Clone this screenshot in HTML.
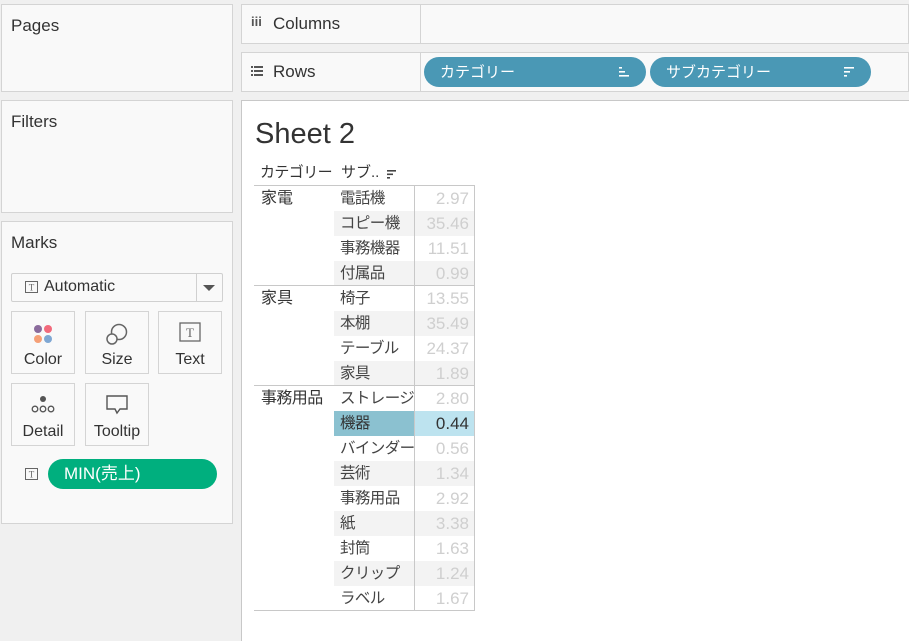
<!DOCTYPE html>
<html><head><meta charset="utf-8"><style>
*{box-sizing:border-box;margin:0;padding:0}
body{width:909px;height:641px;background:#f0f0f0;font-family:"Liberation Sans","Noto Sans CJK JP",sans-serif;color:#333;position:relative;overflow:hidden}
.p{position:absolute;background:#f9f9f9;border:1px solid #d4d4d4}
.t{position:absolute;font-size:17px;color:#333}
.btn{position:absolute;border:1px solid #d4d4d4;background:#f9f9f9;width:64px;height:63px;text-align:center;font-size:16px}
.btn svg{position:absolute;left:50%;top:10px;transform:translateX(-50%)}
.btn span{position:absolute;left:0;right:0;top:39px}
.pill{position:absolute;background:#4a98b5;color:#fff;border-radius:15px;height:30px;font-size:15px;line-height:32px;padding-left:16px}
.cell{position:absolute;font-size:16px;line-height:25px;height:25px;white-space:nowrap;overflow:hidden}
.v{text-align:right;color:#cfcfcf;padding-right:5px;width:60px;left:414px;font-size:17px}
.s{left:334px;width:80px;padding-left:6px;color:#444;font-size:15.5px;letter-spacing:-0.6px}
.g{background:#f3f3f3}
</style></head><body>
<div class="p" style="left:1px;top:4px;width:232px;height:88px"></div>
<div class="t" style="left:11px;top:16px">Pages</div>
<div class="p" style="left:1px;top:100px;width:232px;height:113px"></div>
<div class="t" style="left:11px;top:112px">Filters</div>
<div class="p" style="left:1px;top:221px;width:232px;height:303px"></div>
<div class="t" style="left:11px;top:233px">Marks</div>
<div style="position:absolute;left:11px;top:273px;width:212px;height:29px;border:1px solid #d0d0d0;border-radius:2px;background:#f9f9f9"></div>
<div style="position:absolute;left:196px;top:274px;width:1px;height:27px;background:#d0d0d0"></div>
<div style="position:absolute;left:203px;top:285px;width:0;height:0;border-left:6px solid transparent;border-right:6px solid transparent;border-top:6px solid #555"></div>
<svg style="position:absolute;left:25px;top:281px" width="13" height="12"><rect x=".5" y=".5" width="12" height="11" fill="none" stroke="#666"/><text x="6.5" y="9.5" font-size="9" text-anchor="middle" fill="#666" font-family="Liberation Serif">T</text></svg>
<div class="t" style="left:44px;top:278px;font-size:16px">Automatic</div>
<div class="btn" style="left:11px;top:311px"><svg width="24" height="24"><circle cx="7" cy="7" r="4" fill="#8a6b9c"/><circle cx="17" cy="7" r="4" fill="#f26a7c"/><circle cx="7" cy="17" r="4" fill="#f5a077"/><circle cx="17" cy="17" r="4" fill="#7fa7d3"/></svg><span>Color</span></div>
<div class="btn" style="left:85px;top:311px;width:64px"><svg width="24" height="24"><circle cx="14" cy="10" r="7.5" fill="none" stroke="#666" stroke-width="1.5"/><circle cx="7" cy="17" r="5" fill="#f9f9f9" stroke="#666" stroke-width="1.5"/></svg><span>Size</span></div>
<div class="btn" style="left:158px;top:311px"><svg width="22" height="20"><rect x="1" y="1" width="20" height="18" fill="none" stroke="#666" stroke-width="1.3"/><text x="11" y="15" font-size="13" text-anchor="middle" fill="#666" font-family="Liberation Serif">T</text></svg><span>Text</span></div>
<div class="btn" style="left:11px;top:383px"><svg width="26" height="22"><circle cx="13" cy="5" r="3" fill="#555"/><circle cx="5" cy="15" r="2.8" fill="none" stroke="#555" stroke-width="1.3"/><circle cx="13" cy="15" r="2.8" fill="none" stroke="#555" stroke-width="1.3"/><circle cx="21" cy="15" r="2.8" fill="none" stroke="#555" stroke-width="1.3"/></svg><span>Detail</span></div>
<div class="btn" style="left:85px;top:383px"><svg width="24" height="22"><path d="M2 2H22V15H15L12 19L10 15H2Z" fill="none" stroke="#555" stroke-width="1.4"/></svg><span>Tooltip</span></div>
<svg style="position:absolute;left:25px;top:468px" width="13" height="12"><rect x=".5" y=".5" width="12" height="11" fill="none" stroke="#666"/><text x="6.5" y="9.5" font-size="9" text-anchor="middle" fill="#666" font-family="Liberation Serif">T</text></svg>
<div style="position:absolute;left:48px;top:459px;width:169px;height:30px;border-radius:15px;background:#00af7e;color:#fff;font-size:17px;line-height:30px;padding-left:16px">MIN(売上)</div>

<div class="p" style="left:241px;top:4px;width:668px;height:40px"></div>
<div style="position:absolute;left:420px;top:5px;width:1px;height:38px;background:#d4d4d4"></div>
<div class="t" style="left:251px;top:14px;font-size:13px;font-weight:bold;color:#555">iii</div>
<div class="t" style="left:273px;top:14px">Columns</div>
<div class="p" style="left:241px;top:52px;width:668px;height:40px"></div>
<div style="position:absolute;left:420px;top:53px;width:1px;height:38px;background:#d4d4d4"></div>
<svg style="position:absolute;left:251px;top:66px" width="12" height="10"><g fill="#555"><rect x="0" y="0" width="2" height="2"/><rect x="3" y="0" width="9" height="2"/><rect x="0" y="4" width="2" height="2"/><rect x="3" y="4" width="9" height="2"/><rect x="0" y="8" width="2" height="2"/><rect x="3" y="8" width="9" height="2"/></g></svg>
<div class="t" style="left:273px;top:62px">Rows</div>
<div class="pill" style="left:424px;top:57px;width:222px">カテゴリー<svg style="position:absolute;left:195px;top:10px" width="12" height="10"><g fill="#fff"><rect x="0" y="0" width="3" height="1.6"/><rect x="0" y="4" width="6" height="1.6"/><rect x="0" y="8" width="10" height="1.6"/></g></svg></div>
<div class="pill" style="left:650px;top:57px;width:221px">サブカテゴリー<svg style="position:absolute;left:194px;top:10px" width="12" height="10"><g fill="#fff"><rect x="0" y="0" width="10" height="1.6"/><rect x="0" y="4" width="6" height="1.6"/><rect x="0" y="8" width="3" height="1.6"/></g></svg></div>

<div style="position:absolute;left:241px;top:100px;width:668px;height:541px;background:#fff;border-left:1px solid #c8c8c8;border-top:1px solid #c8c8c8"></div>
<div style="position:absolute;left:255px;top:118px;font-size:29px;color:#333">Sheet 2</div>
<div class="cell" style="left:260px;top:160px;font-size:15px;color:#333;letter-spacing:-0.6px">カテゴリー</div>
<div class="cell" style="left:341px;top:160px;font-size:15px;color:#333">サブ..</div>
<svg style="position:absolute;left:387px;top:170px" width="10" height="9"><g fill="#444"><rect x="0" y="0" width="9" height="1.6"/><rect x="0" y="3.5" width="6" height="1.6"/><rect x="0" y="7" width="3" height="1.6"/></g></svg>

<div style="position:absolute;left:254px;top:185px;width:221px;height:1px;background:#c8c8c8"></div>
<div style="position:absolute;left:254px;top:285px;width:221px;height:1px;background:#c8c8c8"></div>
<div style="position:absolute;left:254px;top:385px;width:221px;height:1px;background:#c8c8c8"></div>
<div style="position:absolute;left:254px;top:610px;width:221px;height:1px;background:#c8c8c8"></div>
<div class="cell" style="left:261px;top:186px;color:#333">家電</div>
<div class="cell" style="left:261px;top:286px;color:#333">家具</div>
<div class="cell" style="left:261px;top:386px;color:#333;letter-spacing:-0.6px">事務用品</div>

<div class="cell s" style="top:186px">電話機</div><div class="cell v" style="top:186px">2.97</div>
<div class="cell s g" style="top:211px">コピー機</div><div class="cell v g" style="top:211px">35.46</div>
<div class="cell s" style="top:236px">事務機器</div><div class="cell v" style="top:236px">11.51</div>
<div class="cell s g" style="top:261px;height:24px">付属品</div><div class="cell v g" style="top:261px;height:24px">0.99</div>
<div class="cell s" style="top:286px">椅子</div><div class="cell v" style="top:286px">13.55</div>
<div class="cell s g" style="top:311px">本棚</div><div class="cell v g" style="top:311px">35.49</div>
<div class="cell s" style="top:336px">テーブル</div><div class="cell v" style="top:336px">24.37</div>
<div class="cell s g" style="top:361px;height:24px">家具</div><div class="cell v g" style="top:361px;height:24px">1.89</div>
<div class="cell s" style="top:386px">ストレージ</div><div class="cell v" style="top:386px">2.80</div>
<div class="cell s" style="top:411px;background:#8bc1d0;color:#333">機器</div><div class="cell v" style="top:411px;background:#bde3ef;color:#333">0.44</div>
<div class="cell s" style="top:436px">バインダー</div><div class="cell v" style="top:436px">0.56</div>
<div class="cell s g" style="top:461px">芸術</div><div class="cell v g" style="top:461px">1.34</div>
<div class="cell s" style="top:486px">事務用品</div><div class="cell v" style="top:486px">2.92</div>
<div class="cell s g" style="top:511px">紙</div><div class="cell v g" style="top:511px">3.38</div>
<div class="cell s" style="top:536px">封筒</div><div class="cell v" style="top:536px">1.63</div>
<div class="cell s g" style="top:561px">クリップ</div><div class="cell v g" style="top:561px">1.24</div>
<div class="cell s" style="top:586px">ラベル</div><div class="cell v" style="top:586px">1.67</div>
<div style="position:absolute;left:414px;top:185px;width:1px;height:426px;background:#c8c8c8"></div>
<div style="position:absolute;left:474px;top:185px;width:1px;height:426px;background:#c8c8c8"></div>
</body></html>
